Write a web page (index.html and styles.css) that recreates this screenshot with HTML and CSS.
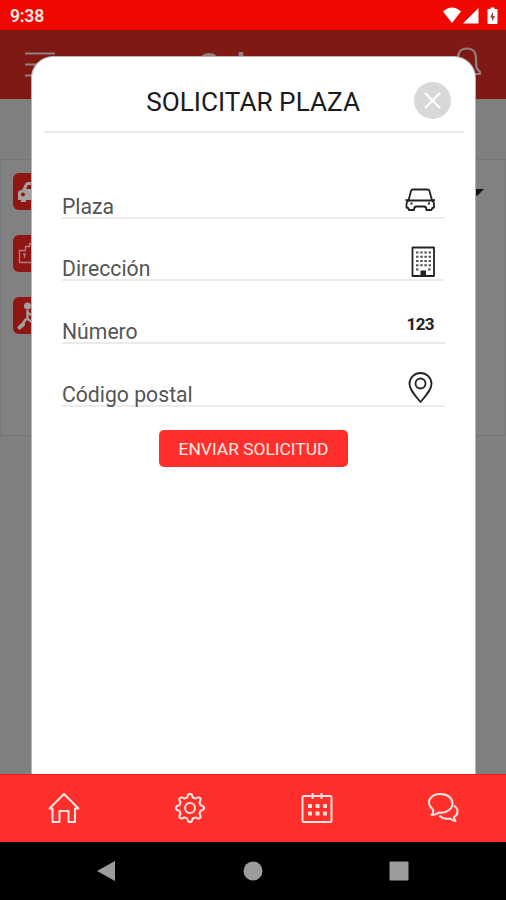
FILE: index.html
```html
<!DOCTYPE html>
<html lang="es">
<head>
	<meta charset="UTF-8">
	<meta name="viewport" content="width=device-width, initial-scale=1.0">
	<title>Solicitar plaza</title>
	<link rel="stylesheet" href="styles.css">
</head>
<body>
	<div class="status-bar">
		<div class="clock">9:38</div>
		<svg class="status-icons" width="56" height="18" viewBox="0 0 56 18">
			<path d="M0 4.5Q9 -3.5 18 4.5L9 16Z"/>
			<path d="M20 16.5L35.500 1V16.500Z"/>
			<path d="M47.500 0.500h4v1.500h2q1 0 1 1V16q0 1-1 1h-8q-1 0-1-1V3q0-1 1-1h2z"/>
			<path class="bolt" d="M50 5L47 10.500h2V14.500L52 9h-2z"/>
		</svg>
	</div>

	<div class="screen">
		<div class="header">
			<svg class="menu-icon" width="32" height="28" viewBox="0 0 32 28">
				<path d="M1 2.500H31M1 13.500H31M1 24.500H31"/>
			</svg>
			<div class="brand">Sol</div>
			<svg class="bell-icon" width="28" height="32" viewBox="0 0 28 32">
				<path d="M5 11C5 5 8 1.500 14 1.500S23 5 23 11C23 20 23 22 27 25V27H1V25C5 22 5 20 5 11ZM10.500 27Q14 33 17.500 27"/>
			</svg>
		</div>
		<div class="toolbar"></div>
		<div class="panel">
			<div class="tile">
				<svg width="37" height="37" viewBox="0 0 37 37">
					<path class="fill" d="M5 20q0-3 4-3l3-6q1-2 3-2h8q2 0 3 2l3 6q4 0 4 4v6h-3v2h-5v-2H13v2H8v-2H5z"/>
					<path class="hole" d="M13 16l2-4h7l2 4zM8 21.500a2 2 0 1 0 4 0a2 2 0 1 0-4 0"/>
				</svg>
			</div>
			<div class="tile">
				<svg width="37" height="37" viewBox="0 0 37 37">
					<path class="line" d="M6.500 15.500h6v-4h4v-3h8v7h6v12h-24zM10 19h3M11.500 19v4"/>
				</svg>
			</div>
			<div class="tile">
				<svg width="37" height="37" viewBox="0 0 37 37">
					<circle class="fill" cx="14.500" cy="9" r="3.500"/>
					<path class="limb" d="M14.500 13V22L22 27M15 16L22 20M13 22L9.500 27"/>
					<path class="foot" d="M6.500 30.500L10 27.500"/>
				</svg>
			</div>
			<div class="caret"></div>
		</div>

		<div class="modal">
			<div class="modal-head">
				<div class="modal-title">SOLICITAR PLAZA</div>
				<div class="close">
					<svg width="37" height="37" viewBox="0 0 37 37">
						<path d="M11 11L26 26M26 11L11 26"/>
					</svg>
				</div>
			</div>
			<div class="form">
				<div class="field">
					<span>Plaza</span>
					<svg width="50" height="40" viewBox="0 0 50 40">
						<path d="M13.500 20.500L16 11Q16.500 9.500 18 9.500H32.500Q34 9.500 34.500 11L37 20.500M13.500 20.500H37M13.500 20.500Q11.500 22 11.500 24V27.500Q13.500 27.500 14 30H19Q19 26.500 21.500 26.500H29Q31.500 26.500 31.500 30H36.500Q37 27.500 39 27.500V24Q39 22 37 20.500M10.500 20L13.500 20.500M40 20L37 20.500M15.500 23.500H17.500M33 23.500H35"/>
					</svg>
				</div>
				<div class="field">
					<span>Dirección</span>
					<svg width="50" height="40" viewBox="0 0 50 40">
						<rect x="17.500" y="5.500" width="21.500" height="28.500"/>
						<path class="windows" d="M21 10.500H36M21 14.800H36M21 19H36M21 23.300H36M21 27.500H24.500M33 27.500H36"/>
						<path class="solid" d="M25.500 28.500h5.500v5.500h-5.500z"/>
					</svg>
				</div>
				<div class="field">
					<span>Número</span>
					<div class="digits">123</div>
				</div>
				<div class="field">
					<span>Código postal</span>
					<svg width="50" height="40" viewBox="0 0 50 40">
						<path d="M25.500 34C20 27.500 14.500 21.500 14.500 16A11 11 0 0 1 36.500 16C36.500 21.500 31 27.500 25.500 34Z"/>
						<circle cx="25.500" cy="15.500" r="5"/>
					</svg>
				</div>
				<div class="send">ENVIAR SOLICITUD</div>
			</div>
		</div>
	</div>

	<div class="tabs">
		<div class="tab">
			<svg width="32" height="32" viewBox="0 0 32 32">
				<path d="M1.500 16.500L16 2L30.500 16.500H27V30H20.500V19H11.500V30H4.500V16.500Z"/>
			</svg>
		</div>
		<div class="tab">
			<svg width="32" height="32" viewBox="0 0 32 32">
				<path d="M13.2 5.500Q14 1.800 16 1.800T18.800 5.500L21.600 6.600Q24.800 4.600 26.100 5.900T25.400 10.400L26.500 13.200Q30.200 14 30.200 16T26.500 18.800L25.400 21.600Q27.400 24.800 26.100 26.100T21.600 25.400L18.800 26.500Q18 30.200 16 30.200T13.200 26.500L10.400 25.400Q7.200 27.400 5.900 26.100T6.600 21.600L5.500 18.800Q1.800 18 1.800 16T5.500 13.200L6.600 10.400Q4.600 7.200 5.900 5.900T10.400 6.600Z"/>
				<circle cx="16" cy="16" r="5"/>
			</svg>
		</div>
		<div class="tab">
			<svg width="32" height="32" viewBox="0 0 32 32">
				<rect x="1.500" y="4" width="29" height="26" rx="1.500"/>
				<path d="M11.500 1V7M20.500 1V7"/>
				<path class="days" d="M7 14H26M7 21.500H26"/>
			</svg>
		</div>
		<div class="tab">
			<svg width="32" height="32" viewBox="0 0 32 32">
				<path d="M6 17.500C-2 11 3 2 13.500 2C21 2 25.500 6.500 25.500 11.500C25.500 17.500 19 21.500 11.500 20.500Q9 23 4.500 23Q7 21 6 17.500Z"/>
				<path d="M27 13.500C32 17 31.500 22.500 27 25Q27 27 28.500 29Q25 28.500 23 26.500Q16 27.500 12.500 23.500"/>
			</svg>
		</div>
	</div>

	<div class="nav-bar">
		<svg width="20" height="22" viewBox="0 0 20 22"><path d="M1 11L19 1V21Z"/></svg>
		<svg width="20" height="20" viewBox="0 0 20 20"><circle cx="10" cy="10" r="9.500"/></svg>
		<svg width="20" height="20" viewBox="0 0 20 20"><rect x="0.500" y="0.500" width="19" height="19" rx="1"/></svg>
	</div>
</body>
</html>
```
FILE: styles.css
```css
body{
	margin: 0;
	height: 900px;
	display: flex;
	flex-direction: column;
	overflow: hidden;
	font-family: Roboto, sans-serif;
	background-color: #000;
}
svg{
	display: block;
	fill: none;
	stroke-linejoin: round;
}
.status-bar{
	height: 30px;
	box-sizing: border-box;
	padding: 1px 7px 0 10px;
	display: flex;
	align-items: center;
	justify-content: space-between;
	background-color: #f00800;
}
.clock{
	color: #ffe9e6;
	font-size: 17.500px;
	font-weight: 600;
	letter-spacing: -0.200px;
}
.status-icons{
	fill: #fff;
}
.bolt{
	fill: #a33;
}
.screen{
	position: relative;
	height: 744px;
	overflow: hidden;
	background-color: #808080;
}
.header{
	height: 69px;
	box-sizing: border-box;
	padding: 16px 25px 0 24px;
	display: flex;
	align-items: flex-start;
	background-color: #7f1914;
}
.header svg{
	stroke: #948080;
	stroke-width: 2.2;
}
.menu-icon{
	margin-top: 5px;
}
.brand{
	margin-left: 143px;
	color: #948080;
	font-size: 32px;
	font-weight: 700;
	line-height: 36px;
}
.bell-icon{
	margin: 1px 0 0 auto;
}
.toolbar{
	height: 60px;
}
.panel{
	height: 277px;
	box-sizing: border-box;
	border: solid 1px #767676;
	padding: 13px 12px;
	display: flex;
	flex-direction: column;
	gap: 25px;
	background-color: #818181;
	position: relative;
}
.tile{
	width: 37px;
	height: 37px;
	border-radius: 6px;
	background-color: #8f1613;
}
.tile .fill{
	fill: #a3a0a0;
}
.tile .hole{
	fill: #8f1613;
}
.tile .line{
	stroke: #b08080;
	stroke-width: 1.3;
}
.tile .limb{
	stroke: #a3a0a0;
	stroke-width: 2.4;
}
.tile .foot{
	stroke: #a3a0a0;
	stroke-width: 4;
	stroke-linecap: round;
}
.caret{
	position: absolute;
	right: 21px;
	top: 29px;
	border: solid 7px transparent;
	border-top-color: #111;
	border-bottom: 0;
}
.modal{
	position: absolute;
	left: 31px;
	top: 26px;
	width: 445px;
	height: 740px;
	box-sizing: border-box;
	border: solid 1px #b5b5b5;
	border-bottom: 0;
	border-radius: 22px 22px 0 0;
	background-color: #fff;
}
.modal-head{
	height: 76px;
	box-sizing: border-box;
	margin: 0 11px 0 12px;
	border-bottom: solid 2px #ebebeb;
	display: flex;
	align-items: center;
	justify-content: flex-end;
	padding: 12px 13px 0 0;
	gap: 54px;
}
.modal-title{
	color: #1b1b1b;
	font-size: 26.200px;
	line-height: 30px;
	padding-top: 4px;
	white-space: nowrap;
}
.close{
	width: 37px;
	height: 37px;
	border-radius: 50%;
	background-color: #d8d8d8;
}
.close svg{
	stroke: #fff;
	stroke-width: 2.2;
}
.form{
	padding: 23px 30px 0 30px;
	display: flex;
	flex-direction: column;
}
.field{
	height: 62.700px;
	box-sizing: border-box;
	border-bottom: solid 2px #ebebeb;
	display: flex;
	justify-content: space-between;
	align-items: flex-end;
	color: #555;
	font-size: 21.200px;
	line-height: 20px;
}
.field svg{
	stroke: #222;
	stroke-width: 1.800;
	margin-bottom: -3px;
}
.field .windows{
	stroke-width: 2;
	stroke-dasharray: 2.500 1.700;
	stroke: #555;
}
.field .solid{
	fill: #222;
	stroke: none;
}
.digits{
	padding: 0 11px 8px 0;
	color: #222;
	font-size: 17px;
	font-weight: 700;
	letter-spacing: -0.600px;
}
.send{
	width: 189px;
	height: 37px;
	margin: 23px 0 0 97px;
	border-radius: 5px;
	background-color: #ff302c;
	color: #ffe9e6;
	font-size: 17.400px;
	line-height: 39px;
	text-align: center;
}
.tabs{
	height: 68px;
	box-sizing: border-box;
	border-top: solid 1px #ee1d1d;
	display: grid;
	grid-template-columns: repeat(4,1fr);
	background-color: #ff302c;
}
.tab{
	display: flex;
	align-items: center;
	justify-content: center;
	padding: 0 0 1px 1px;
}
.tab svg{
	stroke: #ffe3df;
	stroke-width: 2;
}
.tab .days{
	stroke-width: 4;
	stroke-dasharray: 4 3.500;
}
.nav-bar{
	height: 58px;
	display: flex;
	align-items: center;
	justify-content: space-between;
	padding: 0 97px 0 96px;
	background-color: #000;
}
.nav-bar svg{
	fill: #9c9c9c;
}
```
